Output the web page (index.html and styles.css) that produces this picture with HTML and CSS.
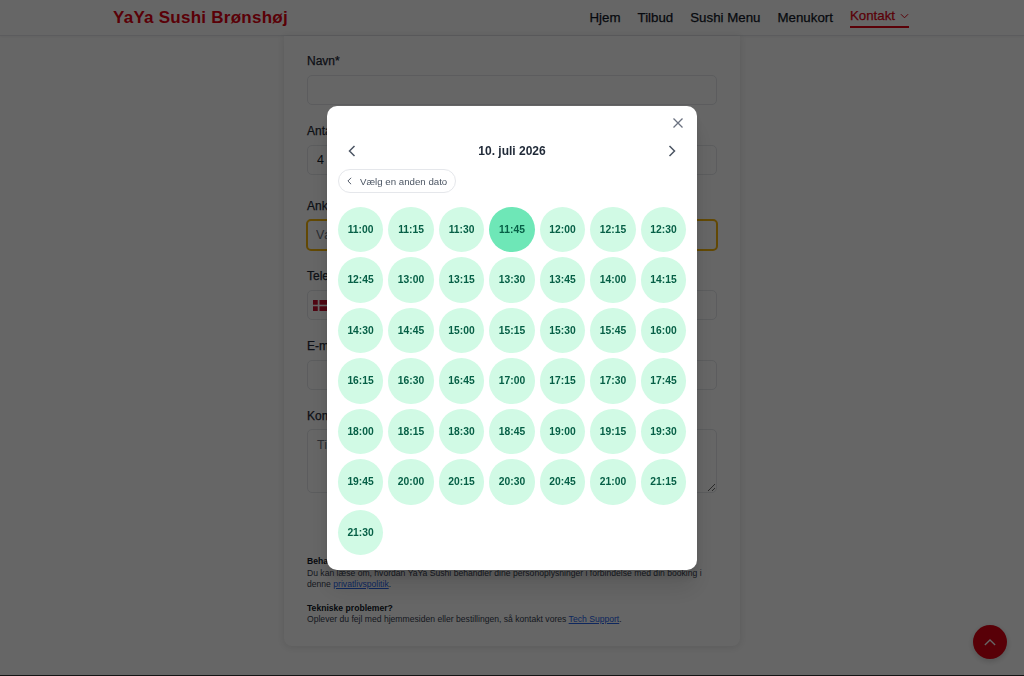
FILE: index.html
```html
<!DOCTYPE html>
<html lang="da">
<head>
<meta charset="utf-8">
<title>YaYa Sushi Brønshøj</title>
<link rel="stylesheet" href="styles.css">
</head>
<body>
<header class="site-header">
  <div class="header-inner">
    <a class="logo" href="#">YaYa Sushi Brønshøj</a>
    <nav class="nav">
      <a href="#">Hjem</a>
      <a href="#">Tilbud</a>
      <a href="#">Sushi Menu</a>
      <a href="#">Menukort</a>
      <a class="active" href="#">Kontakt<svg class="nav-caret" viewBox="0 0 10 6" width="9" height="6"><path d="M1 1l4 4 4-4" fill="none" stroke="currentColor" stroke-width="1.1"/></svg></a>
    </nav>
  </div>
</header>
<main class="main">
  <section class="card">
    <form class="form">
      <div class="field"><label>Navn*</label><input class="input" type="text"></div>
      <div class="field field-wide"><label>Antal personer*</label><input class="input" type="text" value="4"></div>
      <div class="field"><label>Ankomst*</label><input class="input input-focus" type="text" placeholder="Vælg dato og tid"></div>
      <div class="field"><label>Telefon*</label>
        <div class="input phone">
          <svg class="flag" viewBox="0 0 37 28" width="16" height="11" preserveAspectRatio="none"><rect width="37" height="28" fill="#c8102e"/><rect x="11" width="4" height="28" fill="#fff"/><rect y="12" width="37" height="4" fill="#fff"/></svg>
        </div>
      </div>
      <div class="field"><label>E-mail*</label><input class="input" type="text"></div>
      <div class="field"><label>Kommentar</label><textarea class="input textarea" placeholder="Tilføj en kommentar"></textarea></div>
      <div class="submit-row"></div>
      <div class="notes">
        <p><strong>Behandling af personoplysninger</strong><br>Du kan læse om, hvordan YaYa Sushi behandler dine personoplysninger i forbindelse med din booking i denne <a href="#">privatlivspolitik</a>.</p>
        <p><strong>Tekniske problemer?</strong><br>Oplever du fejl med hjemmesiden eller bestillingen, så kontakt vores <a href="#">Tech Support</a>.</p>
      </div>
    </form>
  </section>
</main>
<div class="page-end"></div>

<button class="to-top" type="button" aria-label="Til toppen">
  <svg viewBox="0 0 14 8" width="12" height="7"><path d="M1 7l6-6 6 6" fill="none" stroke="#fff" stroke-width="1.5"/></svg>
</button>

<div class="overlay"></div>

<div class="modal">
  <button class="close" type="button" aria-label="Luk">
    <svg viewBox="0 0 12 12" width="12" height="12"><path d="M1.5 1.5l9 9M10.5 1.5l-9 9" fill="none" stroke="currentColor" stroke-width="1.3"/></svg>
  </button>
  <div class="month-row">
    <button class="arrow" type="button" aria-label="Forrige"><svg viewBox="0 0 8 12" width="8" height="12"><path d="M6.5 1L1.5 6l5 5" fill="none" stroke="currentColor" stroke-width="1.5"/></svg></button>
    <h2 class="date-title">10. juli 2026</h2>
    <button class="arrow" type="button" aria-label="Næste"><svg viewBox="0 0 8 12" width="8" height="12"><path d="M1.5 1l5 5-5 5" fill="none" stroke="currentColor" stroke-width="1.5"/></svg></button>
  </div>
  <button class="back-pill" type="button">
    <svg viewBox="0 0 6 10" width="5" height="8"><path d="M5 1L1 5l4 4" fill="none" stroke="currentColor" stroke-width="1.2"/></svg>
    Vælg en anden dato
  </button>
  <div class="slots">
    <button class="slot">11:00</button><button class="slot">11:15</button><button class="slot">11:30</button><button class="slot selected">11:45</button><button class="slot">12:00</button><button class="slot">12:15</button><button class="slot">12:30</button>
    <button class="slot">12:45</button><button class="slot">13:00</button><button class="slot">13:15</button><button class="slot">13:30</button><button class="slot">13:45</button><button class="slot">14:00</button><button class="slot">14:15</button>
    <button class="slot">14:30</button><button class="slot">14:45</button><button class="slot">15:00</button><button class="slot">15:15</button><button class="slot">15:30</button><button class="slot">15:45</button><button class="slot">16:00</button>
    <button class="slot">16:15</button><button class="slot">16:30</button><button class="slot">16:45</button><button class="slot">17:00</button><button class="slot">17:15</button><button class="slot">17:30</button><button class="slot">17:45</button>
    <button class="slot">18:00</button><button class="slot">18:15</button><button class="slot">18:30</button><button class="slot">18:45</button><button class="slot">19:00</button><button class="slot">19:15</button><button class="slot">19:30</button>
    <button class="slot">19:45</button><button class="slot">20:00</button><button class="slot">20:15</button><button class="slot">20:30</button><button class="slot">20:45</button><button class="slot">21:00</button><button class="slot">21:15</button>
    <button class="slot">21:30</button>
  </div>
</div>
</body>
</html>
```
FILE: styles.css
```css
* { box-sizing: border-box; }
html, body { margin: 0; height: 100%; }
body {
  background: #fff;
  color: #111827;
  font-family: "Liberation Sans", Arial, sans-serif;
  overflow: hidden;
}
button { font-family: inherit; border: 0; background: none; padding: 0; cursor: pointer; }

.site-header {
  height: 36px;
  background: #fff;
  border-bottom: 1px solid #e5e7eb;
  box-shadow: 0 1px 2px rgba(0,0,0,.05);
}
.header-inner {
  width: 796px;
  margin: 0 0 0 113px;
  height: 35px;
  display: flex;
  align-items: center;
  justify-content: space-between;
}
.logo {
  font-weight: 700;
  font-size: 17px;
  letter-spacing: .26px;
  color: #e00012;
  text-decoration: none;
}
.nav { display: flex; gap: 17px; align-items: center; }
.nav a {
  font-size: 13.3px;
  -webkit-text-stroke: .25px currentColor;
  color: #111827;
  text-decoration: none;
  line-height: 16px;
}
.nav a.active {
  color: #e00012;
  border-bottom: 2px solid #e00012;
  padding: 0 0 2px;
  margin-top: 1px;
}
.nav-caret { margin-left: 5px; vertical-align: 1px; }

.main { display: flex; justify-content: center; }
.card {
  width: 456px;
  height: 610px;
  background: #fff;
  border-radius: 0 0 8px 8px;
  box-shadow: 0 1px 8px rgba(0,0,0,.12);
  padding: 17px 23px 0;
}
.form { display: flex; flex-direction: column; }
.field { display: flex; flex-direction: column; margin-bottom: 18px; }
.field-wide { margin-bottom: 23px; }
.field label {
  font-size: 12px;
  -webkit-text-stroke: .25px currentColor;
  line-height: 16px;
  color: #1f2937;
  margin-bottom: 6px;
}
.input {
  width: 410px;
  height: 30px;
  border: 1px solid #e5e7eb;
  border-radius: 5px;
  background: #fff;
  font-family: inherit;
  font-size: 12.5px;
  padding: 0 9px;
  color: #111827;
  outline: 0;
}
.input::placeholder { color: #6b7280; }
.input-focus {
  width: 412px;
  height: 32px;
  margin: -1px 0 -1px -1px;
  padding: 0 8px;
  border: 2px solid #f5b50a;
}
.phone { display: flex; align-items: center; padding-left: 5px; }
.textarea { height: 64px; margin-top: -1px; padding-top: 8px; resize: vertical; }
.submit-row { height: 45px; }
.notes {
  font-size: 8.6px;
  line-height: 11.5px;
  color: #374151;
}
.notes p { margin: 0 0 12px; }
.notes strong { color: #111827; }
.notes a { color: #2563eb; }

.page-end {
  position: fixed;
  left: 0; right: 0; bottom: 0;
  height: 1px;
  background: #333;
}

.to-top {
  position: fixed;
  left: 973px;
  top: 625px;
  width: 34px;
  height: 34px;
  border-radius: 50%;
  background: #dc0012;
  box-shadow: 0 2px 6px rgba(0,0,0,.2);
  display: flex;
  align-items: center;
  justify-content: center;
}

.overlay {
  position: fixed;
  inset: 0;
  background: rgba(0,0,0,.6);
}

.modal {
  position: fixed;
  left: 327px;
  top: 106px;
  width: 370px;
  height: 464px;
  background: #fff;
  border-radius: 10px;
  padding: 33px 11px 0;
  box-shadow: 0 20px 25px rgba(0,0,0,.1), 0 8px 10px rgba(0,0,0,.1);
}
.close {
  position: absolute;
  right: 13px;
  top: 11px;
  width: 12px;
  height: 12px;
  color: #6b7280;
  display: flex;
}
.month-row {
  display: flex;
  align-items: center;
  justify-content: space-between;
  height: 24px;
  padding: 0 10px;
}
.arrow { color: #4b5563; display: flex; }
.date-title {
  margin: 0;
  font-size: 12px;
  font-weight: 700;
  color: #1f2937;
}
.back-pill {
  display: inline-flex;
  align-items: center;
  gap: 8px;
  height: 24px;
  margin-top: 6px;
  padding: 0 8px;
  border: 1px solid #e5e7eb;
  border-radius: 12px;
  font-size: 9.7px;
  color: #4b5563;
  background: #fff;
}
.slots {
  display: grid;
  grid-template-columns: repeat(7, 1fr);
  gap: 5.4px;
  margin-top: 14px;
}
.slot {
  aspect-ratio: 1;
  border-radius: 50%;
  background: #d1fae5;
  color: #065f46;
  font-size: 10.3px;
  font-weight: 700;
  display: flex;
  align-items: center;
  justify-content: center;
  padding-bottom: .5px;
}
.slot.selected { background: #6ee7b7; }
```
